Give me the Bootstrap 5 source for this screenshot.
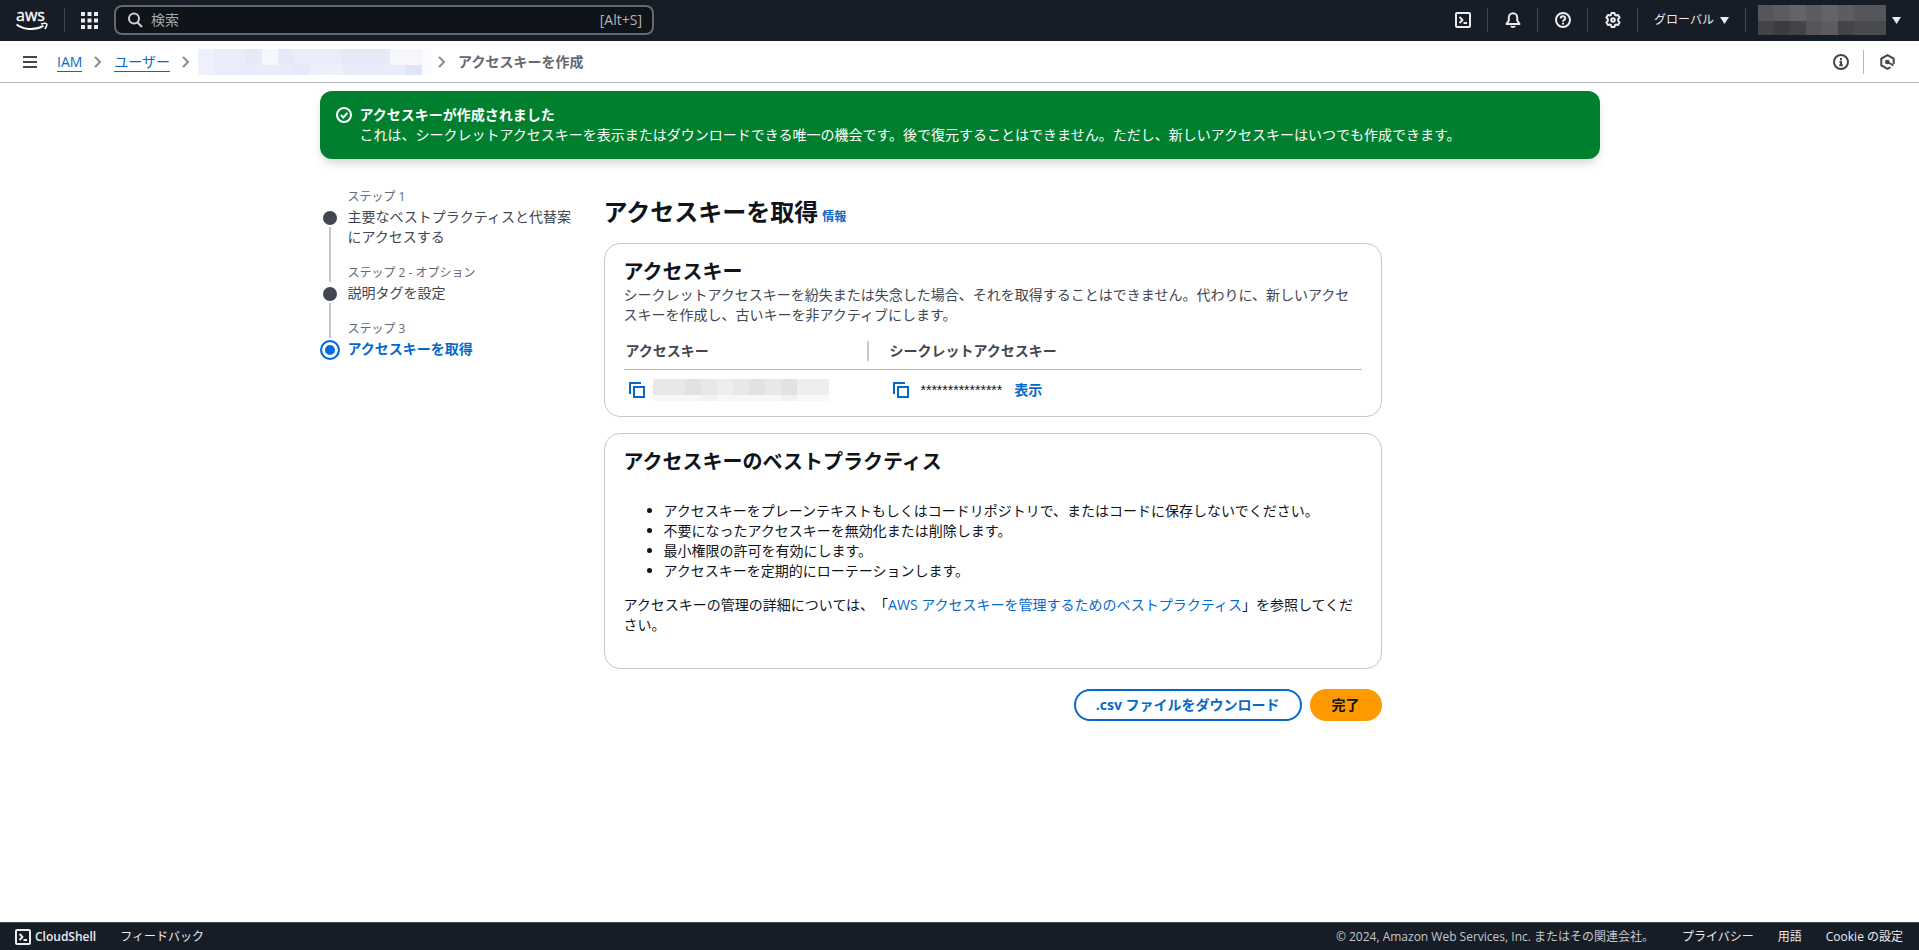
<!DOCTYPE html>
<html lang="ja">
<head>
<meta charset="utf-8">
<meta name="viewport" content="width=device-width, initial-scale=1">
<title>アクセスキーを作成 | IAM</title>
<link href="https://cdn.jsdelivr.net/npm/bootstrap@5.3.0/dist/css/bootstrap.min.css" rel="stylesheet">
<style>
  body { font-family: "Open Sans", "Noto Sans CJK JP", sans-serif; font-size: 14px; line-height: 20px; color: #0f141a; background: #fff; text-spacing-trim: space-all; font-feature-settings: "chws" 0; }
  svg { display: block; flex: none; }
  a { color: #0569c9; text-decoration: none; }

  .topbar { height: 41px; background: #161d27; color: #ebebf0; padding: 0 18px 1px 16px; }
  .topbar button, .crumbbar button, .iconbtn { background: none; border: 0; padding: 0; color: inherit; }
  .vline { width: 1px; height: 24px; background: #424650; flex: none; }
  .searchbox { width: 540px; height: 30px; border: 2px solid #656871; border-radius: 8px; background: #0f141a; padding: 0 10px 0 12px; }
  .searchbox input { background: none; border: 0; outline: 0; color: #fff; min-width: 0; padding: 0 0 0 8px; }
  .searchbox input::placeholder { color: #a4a4ad; opacity: 1; }
  .searchbox kbd { background: none; color: #b4b4bb; font: inherit; padding: 0; }
  .iconcell { width: 49px; }
  .region { font-size: 12px; gap: 6px; }
  .acctsep { margin: 0 12px 0 16px; }
  .account { width: 128px; height: 30px; }
  .acctbtn { gap: 6px; }

  .crumbbar { height: 42px; border-bottom: 1px solid #b4b4bb; color: #424650; padding: 0 24px 0 23px; }
  .crumbs a { border-bottom: 1px solid #0569c9; line-height: 18px; }
  .crumbs .sep { padding: 0 12px; }
  .crumbs .sep-tight { padding: 0 8px 0 12px; }
  .crumbs .sep-end { padding: 0 12px 0 6px; }
  .crumbs .here { color: #656871; font-weight: 600; }
  .crumbbar .vline { background: #b4b4bb; margin: 0 16px 0 14px; }

  .wrap { max-width: 1280px; }
  .flash { background: #00802f; color: #fff; border-radius: 12px; padding: 14px 16px; box-shadow: 0 6px 12px -4px rgba(15,20,26,.25); }
  .flash svg { margin-top: 2px; }
  .wizard { margin-top: 30px; }

  .steps { width: 260px; }
  .steps li { display: grid; grid-template-columns: 20px 1fr; column-gap: 8px; color: #424650; padding-bottom: 18px; position: relative; }
  .steps .cap { font-size: 12px; line-height: 16px; grid-column: 2; color: #656871; padding-bottom: 2px; font-weight: 400; }
  .steps .dot { width: 14px; height: 14px; border-radius: 50%; background: #424650; justify-self: center; margin-top: 4px; }
  .steps li:not(:last-child)::after { content: ""; position: absolute; left: 9px; top: 38px; bottom: -17px; width: 2px; background: #c6c6cd; }
  .steps .active { color: #0569c9; font-weight: 700; }
  .steps .active .dot { width: 20px; height: 20px; margin-top: 1px; border: 2px solid #006ce0; background: #006ce0; box-shadow: inset 0 0 0 3px #fff; }

  .mainpane { max-width: 778px; }
  h1 { font-size: 24px; line-height: 30px; font-weight: 700; }
  h2 { font-size: 20px; line-height: 26px; font-weight: 700; }
  .info { font-size: 12px; font-weight: 700; }
  .panel { border: 1px solid #c6c6cd; border-radius: 16px; padding: 15px 19px; }
  .muted { color: #424650; }
  .keys { table-layout: fixed; margin-top: 10px; }
  .keys th { padding: 6px 0 8px 2px; font-weight: 600; color: #424650; border-bottom: 1px solid #b4b4bb; }
  .keys th:first-child { width: 264px; }
  .keys th:first-child > div { border-right: 2px solid #c6c6cd; width: 243px; }
  .keys td { padding: 9px 5px 0; }
  .keymask { width: 176px; height: 22px; }
  .secret { font-family: "Liberation Sans", sans-serif; }
  .tips { padding-left: 40px; margin: 26px 0 14px; }
  .tipnote { margin-bottom: 18px; }

  .pill { border-radius: 20px; border: 2px solid #0569c9; background: #fff; color: #0569c9; font-weight: 700; font-size: 14px; line-height: 20px; padding: 4px 20px; }
  .pill.primary { background: #ff9900; border-color: #ff9900; color: #0f141a; }

  .footbar { height: 28px; background: #161d27; border-top: 1px solid #424650; color: #ebebf0; font-size: 12px; line-height: 16px; padding: 0 16px 0 15px; }
  .footbar a { color: inherit; }
  .footbar .legal { color: #c6c6cd; margin-right: 4px; }
</style>
</head>
<body class="d-flex flex-column min-vh-100">

<header class="topbar d-flex align-items-center">
  <a href="#" aria-label="AWS">
    <svg width="32" height="32" viewBox="0 0 32 32"><text x="0" y="17" font-size="16" fill="#fff" stroke="#fff" stroke-width=".3">aws</text><path d="M.500 20.500C8 26 19 26.500 27.500 21.800" fill="none" stroke="#fff" stroke-width="2"/><path d="M25 20c3-1 5-.8 5.500-.2s.2 3-1.700 5.200" fill="none" stroke="#fff" stroke-width="1.400"/></svg>
  </a>
  <span class="vline mx-3"></span>
  <button aria-label="サービス">
    <svg width="17" height="17" viewBox="0 0 17 17" fill="#ebebf0"><path d="M0 0h4v4H0zM6.500 0h4v4h-4zM13 0h4v4h-4zM0 6.500h4v4H0zM6.500 6.500h4v4h-4zM13 6.500h4v4h-4zM0 13h4v4H0zM6.500 13h4v4h-4zM13 13h4v4h-4z"/></svg>
  </button>
  <label class="searchbox d-flex align-items-center ms-3">
    <svg width="15" height="16" viewBox="0 0 15 16" fill="none" stroke="#d0d0d6" stroke-width="2"><circle cx="6" cy="6.500" r="5"/><path d="m9.500 10.500 4.500 4.500"/></svg>
    <input class="flex-grow-1" type="search" placeholder="検索" aria-label="検索">
    <kbd>[Alt+S]</kbd>
  </label>
  <div class="d-flex align-items-center ms-auto">
    <button class="iconcell d-flex justify-content-center" aria-label="CloudShell"><svg width="16" height="16" viewBox="0 0 16 16" fill="none" stroke="currentColor" stroke-width="2" stroke-linejoin="round"><rect x="1" y="1" width="14" height="14" rx="1"/><path d="m4.500 5 3 3-3 3M8.500 11h3.500"/></svg></button>
    <span class="vline"></span>
    <button class="iconcell d-flex justify-content-center" aria-label="通知"><svg width="16" height="16" viewBox="0 0 16 16" fill="none" stroke="currentColor" stroke-width="2" stroke-linejoin="round"><path d="M3.800 5.500a4.200 4.200 0 0 1 8.400 0v3L14.500 12h-13l2.300-3.500zM6 14c.8 1.300 3.200 1.300 4 0"/></svg></button>
    <span class="vline"></span>
    <button class="iconcell d-flex justify-content-center" aria-label="ヘルプ"><svg width="16" height="16" viewBox="0 0 16 16" fill="none" stroke="currentColor" stroke-width="2"><circle cx="8" cy="8" r="7"/><path d="M5.700 6.500C5.700 3.500 10.300 3.500 10.300 6.300 10.300 8 8 7.800 8 9.700M8 10.700v1.800"/></svg></button>
    <span class="vline"></span>
    <button class="iconcell d-flex justify-content-center" aria-label="設定"><svg width="16" height="16" viewBox="0 0 16 16" fill="none" stroke="currentColor" stroke-width="2" stroke-linejoin="round"><path d="M6.500 1h3l.5 1.900 1 .6 2-.6 1.600 2.700L13.200 7v2l1.400 1.400-1.600 2.700-2-.6-1 .6-.5 1.900h-3L6 13.100l-1-.6-2 .6-1.600-2.700L2.800 9V7L1.400 5.600 3 2.900l2 .6 1-.6z"/><circle cx="8" cy="8" r="1.800"/></svg></button>
    <span class="vline"></span>
    <button class="region d-flex align-items-center ms-3">グローバル<svg width="9" height="7" viewBox="0 0 9 7" fill="currentColor"><path d="M0 0h9L4.500 7z"/></svg></button>
    <span class="vline acctsep"></span>
    <button class="acctbtn d-flex align-items-center" aria-label="アカウント">
      <svg class="account" viewBox="0 0 128 30" shape-rendering="crispEdges"><path fill="#55565c" d="M0 0h128v16H0z"/><path fill="#5c5d63" d="M16 0h80v16H16z"/><path fill="#64646a" d="M64 0h16v16H64zM32 0h16v16H32z"/><path fill="#434448" d="M0 16h128v14H0z"/><path fill="#3c3d42" d="M16 16h16v14H16z"/><path fill="#55555b" d="M48 16h16v14H48z"/><path fill="#5e5c62" d="M64 16h16v14H64z"/><path fill="#484a4e" d="M96 16h32v14H96z"/></svg>
      <svg width="9" height="7" viewBox="0 0 9 7" fill="currentColor"><path d="M0 0h9L4.500 7z"/></svg>
    </button>
  </div>
</header>

<nav class="crumbbar d-flex align-items-center" aria-label="パンくずリスト">
  <button aria-label="メニュー"><svg width="14" height="12" viewBox="0 0 14 12" fill="currentColor"><path d="M0 0h14v2H0zM0 5h14v2H0zM0 10h14v2H0z"/></svg></button>
  <ol class="crumbs list-unstyled d-flex align-items-center mb-0 ms-3 ps-1">
    <li><a href="#">IAM</a></li>
    <li class="sep"><svg width="8" height="12" viewBox="0 0 8 12" fill="none" stroke="#8c8c94" stroke-width="2"><path d="m1 1 5 5-5 5"/></svg></li>
    <li><a href="#">ユーザー</a></li>
    <li class="sep-tight"><svg width="8" height="12" viewBox="0 0 8 12" fill="none" stroke="#8c8c94" stroke-width="2"><path d="m1 1 5 5-5 5"/></svg></li>
    <li><svg width="234" height="26" viewBox="0 0 234 26" shape-rendering="crispEdges"><path fill="#e9edf9" d="M0 0h224v26H0z"/><path fill="#f5f7fd" d="M64 0h16v16H64zM192 0h32v16h-32z"/><path fill="#e5e9f8" d="M48 0h16v16H48zM80 0h16v16H80zM144 0h48v16h-48zM96 16h16v10H96z"/><path fill="#eef1fb" d="M112 16h32v10h-32zM0 0h16v26H0z"/><path fill="#dfe5f8" d="M208 16h16v10h-16z"/><path fill="#fafbff" d="M224 0h10v26h-10z"/></svg></li>
    <li class="sep-end"><svg width="8" height="12" viewBox="0 0 8 12" fill="none" stroke="#8c8c94" stroke-width="2"><path d="m1 1 5 5-5 5"/></svg></li>
    <li class="here" aria-current="page">アクセスキーを作成</li>
  </ol>
  <div class="d-flex align-items-center ms-auto">
    <button aria-label="情報"><svg width="16" height="16" viewBox="0 0 16 16" fill="none" stroke="currentColor" stroke-width="2"><circle cx="8" cy="8" r="7"/><path d="M8 4v2M6.500 7.700H8V11M6.300 11.300h3.500"/></svg></button>
    <span class="vline"></span>
    <button aria-label="診断"><svg width="15" height="16" viewBox="0 0 15 16" fill="none" stroke="currentColor" stroke-width="2"><path d="M13.700 10V4.600L7.500 1.200 1.300 4.600v6.800l6.200 3.400 3-1.600"/><circle cx="7.300" cy="8" r="1.300" fill="currentColor"/><path d="m7.500 8 6 3.500"/></svg></button>
  </div>
</nav>

<main class="wrap container-fluid p-0 pt-2 flex-grow-1">
  <div class="flash d-flex gap-2" role="status">
    <svg width="16" height="16" viewBox="0 0 16 16" fill="none" stroke="#fff" stroke-width="2"><circle cx="8" cy="8" r="7"/><path d="m4.800 8 2.500 2.500 4-4.500"/></svg>
    <div><div class="fw-bold">アクセスキーが作成されました</div><div>これは、シークレットアクセスキーを表示またはダウンロードできる唯一の機会です。後で復元することはできません。ただし、新しいアクセスキーはいつでも作成できます。</div></div>
  </div>

  <div class="wizard d-flex flex-wrap flex-lg-nowrap">
    <ol class="steps list-unstyled flex-shrink-0 mb-0">
      <li><span class="cap">ステップ 1</span><span class="dot"></span><span>主要なベストプラクティスと代替案にアクセスする</span></li>
      <li><span class="cap">ステップ 2 - オプション</span><span class="dot"></span><span>説明タグを設定</span></li>
      <li class="active" aria-current="step"><span class="cap">ステップ 3</span><span class="dot"></span><span>アクセスキーを取得</span></li>
    </ol>

    <div class="mainpane flex-grow-1 ms-4 pt-2">
      <div class="d-flex align-items-baseline gap-1 mb-3">
        <h1 class="mb-0">アクセスキーを取得</h1>
        <a class="info" href="#">情報</a>
      </div>

      <section class="panel mb-3">
        <h2 class="mb-0">アクセスキー</h2>
        <p class="muted mb-0">シークレットアクセスキーを紛失または失念した場合、それを取得することはできません。代わりに、新しいアクセスキーを作成し、古いキーを非アクティブにします。</p>
        <table class="keys w-100">
          <thead><tr><th scope="col"><div>アクセスキー</div></th><th scope="col">シークレットアクセスキー</th></tr></thead>
          <tbody><tr>
            <td><div class="d-flex align-items-center gap-2">
              <button class="iconbtn" aria-label="アクセスキーをコピー"><svg width="16" height="16" viewBox="0 0 16 16" fill="none" stroke="#0569c9" stroke-width="2"><path d="M1 12V1h11"/><path d="M5 5h10v10H5z"/></svg></button>
              <svg class="keymask" viewBox="0 0 176 22" shape-rendering="crispEdges"><path fill="#e8e8e9" d="M0 0h176v16H0z"/><path fill="#e2e2e4" d="M32 0h16v16H32zM96 0h16v16H96zM128 0h16v16h-16z"/><path fill="#eeeeef" d="M64 0h16v16H64zM144 0h32v16h-32z"/><path fill="#f7f7f8" d="M0 16h176v6H0z"/><path fill="#f1f1f2" d="M48 16h16v6H48zM128 16h16v6h-16z"/></svg>
            </div></td>
            <td><div class="d-flex align-items-center">
              <button class="iconbtn me-2" aria-label="シークレットアクセスキーをコピー"><svg width="16" height="16" viewBox="0 0 16 16" fill="none" stroke="#0569c9" stroke-width="2"><path d="M1 12V1h11"/><path d="M5 5h10v10H5z"/></svg></button>
              <span class="secret ms-1">***************</span>
              <a class="fw-bold ms-2 ps-1" href="#">表示</a>
            </div></td>
          </tr></tbody>
        </table>
      </section>

      <section class="panel">
        <h2 class="mb-0">アクセスキーのベストプラクティス</h2>
        <ul class="tips">
          <li>アクセスキーをプレーンテキストもしくはコードリポジトリで、またはコードに保存しないでください。</li>
          <li>不要になったアクセスキーを無効化または削除します。</li>
          <li>最小権限の許可を有効にします。</li>
          <li>アクセスキーを定期的にローテーションします。</li>
        </ul>
        <p class="tipnote">アクセスキーの管理の詳細については、「<a href="#">AWS アクセスキーを管理するためのベストプラクティス</a>」を参照してください。</p>
      </section>

      <div class="d-flex justify-content-end gap-2 mt-3 pt-1">
        <button class="pill">.csv ファイルをダウンロード</button>
        <button class="pill primary">完了</button>
      </div>
    </div>
  </div>
</main>

<footer class="footbar d-flex align-items-center">
  <a class="d-flex align-items-center gap-1 fw-semibold" href="#"><svg width="16" height="16" viewBox="0 0 16 16" fill="none" stroke="currentColor" stroke-width="2" stroke-linejoin="round"><rect x="1" y="1" width="14" height="14" rx="1"/><path d="m4.500 5 3 3-3 3M8.500 11h3.500"/></svg>CloudShell</a>
  <a class="ms-4" href="#">フィードバック</a>
  <div class="d-flex gap-4 ms-auto"><span class="legal">© 2024, Amazon Web Services, Inc. またはその関連会社。</span><a href="#">プライバシー</a><a href="#">用語</a><a href="#">Cookie の設定</a></div>
</footer>
<script src="https://cdn.jsdelivr.net/npm/bootstrap@5.3.0/dist/js/bootstrap.bundle.min.js"></script>
</body>
</html>
